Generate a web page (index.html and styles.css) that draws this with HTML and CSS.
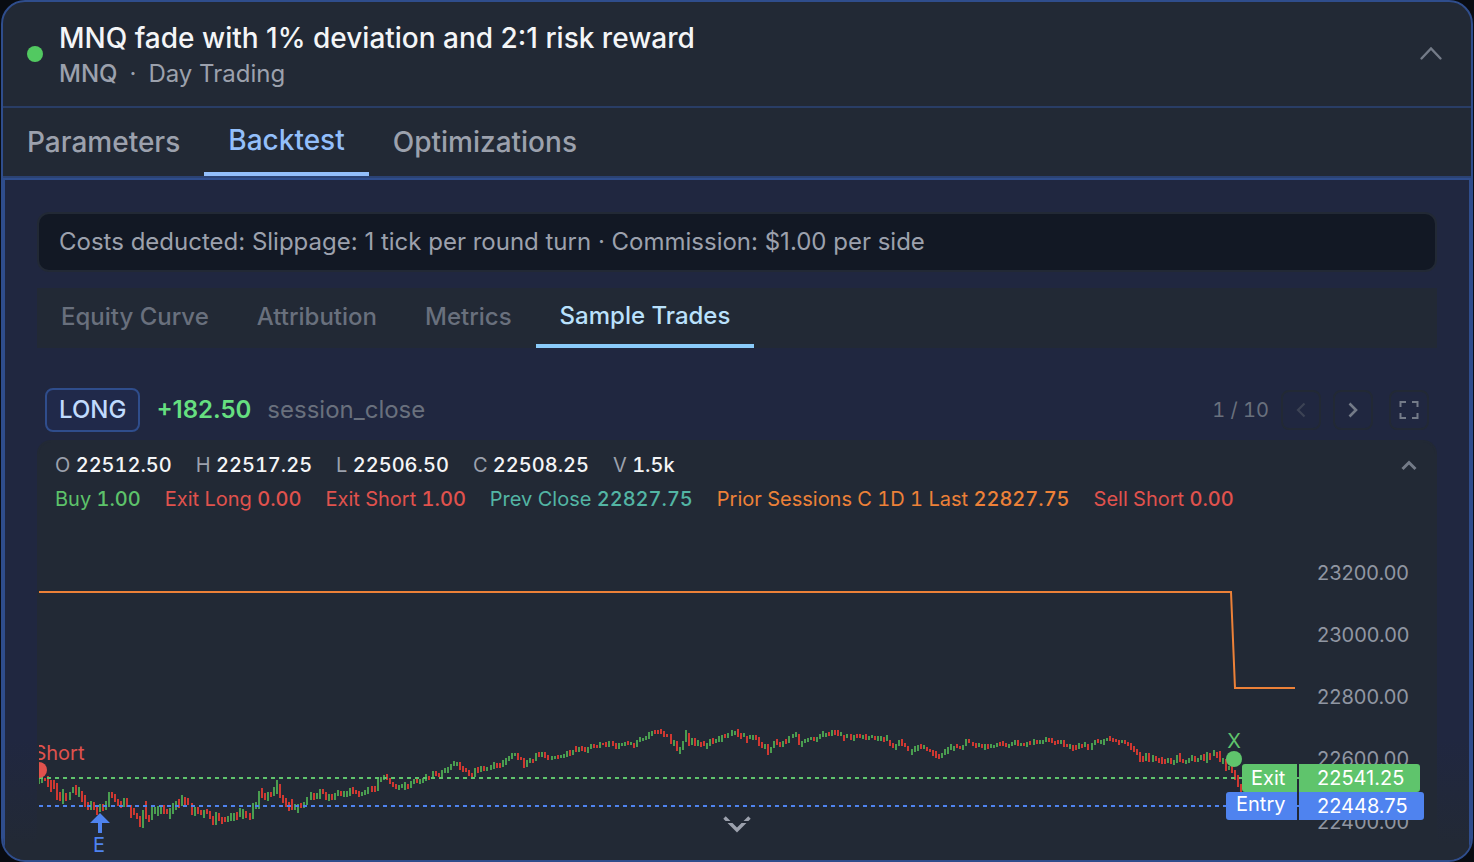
FILE: index.html
```html
<!DOCTYPE html>
<html lang="en">
<head>
<meta charset="utf-8">
<meta name="viewport" content="width=device-width, initial-scale=1">
<title>MNQ fade backtest</title>
<link rel="stylesheet" href="styles.css">
</head>
<body>
<main class="card">
  <header class="card-header">
    <span class="status-dot"></span>
    <div class="heading">
      <h1 class="title">MNQ fade with 1% deviation and 2:1 risk reward</h1>
      <p class="subtitle"><span class="symbol">MNQ</span><span class="sep">·</span><span>Day Trading</span></p>
    </div>
    <button class="icon-button collapse" type="button" aria-label="Collapse strategy">
      <svg width="24" height="24" viewBox="0 0 24 24" fill="none" stroke="currentColor" stroke-width="2.4" stroke-linecap="round"><path d="M2.500 16.500 12 6.500l9.500 10"/></svg>
    </button>
  </header>

  <nav class="tabs" aria-label="Strategy sections">
    <button class="tab" type="button">Parameters</button>
    <button class="tab active" type="button">Backtest</button>
    <button class="tab" type="button">Optimizations</button>
  </nav>

  <section class="panel">
    <p class="costs">Costs deducted: Slippage: 1 tick per round turn · Commission: $1.00 per side</p>

    <nav class="subtabs" aria-label="Backtest results">
      <button class="subtab" type="button">Equity Curve</button>
      <button class="subtab" type="button">Attribution</button>
      <button class="subtab" type="button">Metrics</button>
      <button class="subtab active" type="button">Sample Trades</button>
    </nav>

    <div class="trade-bar">
      <span class="side">LONG</span>
      <span class="profit">+182.50</span>
      <span class="reason">session_close</span>
      <span class="counter">1 / 10</span>
      <button class="icon-button boxed prev" type="button" aria-label="Previous trade" disabled>
        <svg width="24" height="24" viewBox="0 0 24 24" fill="none" stroke="currentColor" stroke-width="2.2"><path d="M15.500 5.500 9 12l6.500 6.500"/></svg>
      </button>
      <button class="icon-button boxed" type="button" aria-label="Next trade">
        <svg width="24" height="24" viewBox="0 0 24 24" fill="none" stroke="currentColor" stroke-width="2.6"><path d="M8.500 5.500 15 12l-6.500 6.500"/></svg>
      </button>
      <button class="icon-button boxed full" type="button" aria-label="Full screen">
        <svg width="24" height="24" viewBox="0 0 24 24" fill="none" stroke="currentColor" stroke-width="2"><path d="M3.500 9V4H9M15 4h5.500v5M20.500 15v5H15M9 20H3.500v-5"/></svg>
      </button>
    </div>

    <div class="chart">
      <div class="legend">
        <div class="legend-row">
          <span>O <b>22512.50</b></span>
          <span>H <b>22517.25</b></span>
          <span>L <b>22506.50</b></span>
          <span>C <b>22508.25</b></span>
          <span>V <b>1.5k</b></span>
          <button class="icon-button legend-toggle" type="button" aria-label="Collapse legend">
            <svg width="20" height="20" viewBox="0 0 20 20" fill="none" stroke="currentColor" stroke-width="3"><path d="M3.500 14 10 7.500l6.500 6.500"/></svg>
          </button>
        </div>
        <div class="legend-row">
          <span class="buy">Buy <em>1.00</em></span>
          <span class="sell">Exit Long <em>0.00</em></span>
          <span class="sell">Exit Short <em>1.00</em></span>
          <span class="prev-close">Prev Close <em>22827.75</em></span>
          <span class="prior">Prior Sessions C 1D 1 Last <em>22827.75</em></span>
          <span class="sell">Sell Short <em>0.00</em></span>
        </div>
      </div>

      <svg class="plot" viewBox="0 0 1396 344" role="img" aria-label="Price chart with entry and exit">
        <g class="axis">
          <text x="1278" y="64">23200.00</text>
          <text x="1278" y="126">23000.00</text>
          <text x="1278" y="188">22800.00</text>
          <text x="1278" y="250">22600.00</text>
          <text x="1278" y="313">22400.00</text>
        </g>
        <path class="prior-line" d="M0 76H1192L1196 172H1256"/>
        <path id="candles-up" class="candle-up"/>
        <path id="candles-down" class="candle-down"/>
        <path class="exit-line" d="M0 262H1260"/>
        <path class="entry-line" d="M0 290H1260"/>

        <text class="mark sell-mark" x="0" y="244">Sell Short</text>
        <circle class="sell-mark" cx="0" cy="254" r="8"/>

        <path class="entry-mark" d="M61 297 71 307H63V317H59V307H51Z"/>
        <text class="mark entry-mark" x="60" y="336">E</text>

        <text class="mark exit-mark" x="1195" y="232">X</text>
        <circle class="exit-mark" cx="1195" cy="243" r="8"/>

        <g class="flag">
          <path class="exit-mark" d="M1258 248H1206a3 3 0 0 0-3 3v22a3 3 0 0 0 3 3h52zM1260 248h118a3 3 0 0 1 3 3v22a3 3 0 0 1-3 3h-118z"/>
          <path class="entry-mark" d="M1258 276H1190a3 3 0 0 0-3 3v22a3 3 0 0 0 3 3h68zM1260 276h122a3 3 0 0 1 3 3v22a3 3 0 0 1-3 3h-122z"/>
          <text x="1212" y="269">Exit</text>
          <text x="1278" y="269">22541.25</text>
          <text x="1197" y="295">Entry</text>
          <text x="1278" y="297">22448.75</text>
        </g>
      </svg>
    </div>

    <button class="icon-button more" type="button" aria-label="Scroll for more">
      <svg width="28" height="18" viewBox="0 0 28 18" fill="none" stroke="currentColor" stroke-width="3.400">
        <clipPath id="more-bands"><path d="M0 0h28v5H0zM0 7h28v11H0z"/></clipPath>
        <path clip-path="url(#more-bands)" d="M1.500 1.500 14 14 26.500 1.500"/>
      </svg>
    </button>
  </section>
</main>
<script src="chart.js"></script>
</body>
</html>
```

FILE: chart.js
```js
const bars = `
78-84g 76-83g 78-81r 76-87r 80-92r 80-89r 83-100r 92-101r 89-104g 93-101r 92-100g 87-93g 85-95r 87-97g 91-102r 95-107r 102-110r 101-110g 102-110r 106-115r
104-112g 104-111r 101-110g 92-107g 92-98r 94-102r 99-106r 101-108r 98-107g 98-107r 105-118r 108-115r 113-119r 116-127r 110-128g 101-119r 115-122r 107-120g 107-114g
106-116g 106-114g 105-114r 109-114r 108-119g 103-114g 101-110g 99-108r 95-106g 97-105r 98-105r 103-115r 107-116g 107-114r 110-115r 110-118g 109-114r 111-119r 116-125r 112-125g
113-121r 117-124r 117-122r 116-122g 113-121g 113-121g 112-120r 108-117g 109-119g 111-118r 113-120r 103-119g 102-109g 91-109g 88-98r 93-100r 92-101g 92-97r 87-96g 80-94g
84-98r 95-103r 98-107r 102-111r 99-110r 104-110g 104-113g 103-108r 102-108g 97-105g 92-100g 93-100r 93-99g 89-99g 89-94r 92-100r 94-101g 94-100r 93-100g
90-96g 91-96r 91-97g 91-97g 88-96g 87-94r 90-94r 91-97r 92-96g 90-95g 87-94g 86-92r 86-92r 78-91g 77-82g 75-80g 74-80r 78-84r 82-87r 84-89r
85-90g 84-88g 82-90g 84-89r 81-88g 79-84g 79-83r 79-84g 78-83g 74-81g 76-80r 71-78g 71-76r 73-77r 70-78g 68-73g 67-73g 64-70g 61-66g 62-66g
62-70r 66-72r 68-72r 70-76r 73-77r 68-77g 67-73r 66-72g 66-71r 67-71g 65-70g 62-69g 63-68r 63-68r 60-67g 58-65g 56-61g 53-59g 53-56g
53-60r 57-60r 58-68r 60-67g 58-63g 59-63r 53-61g 52-57r 52-57g 52-58r 55-60r 56-60g 56-59g 55-59r 55-58g 54-58g 51-57g 50-56r 50-55g 46-52r
47-52g 46-51r 47-52r 47-53g 44-49g 44-48r 45-48r 42-48g 43-45r 42-47r 41-47g 41-46r 43-49r 43-49g 43-46g 42-46g 41-45r 42-45g 43-48r 40-47g
37-42g 38-41g 36-40g 32-39g 31-36g 30-34r 30-34r 29-34r 31-37r 34-37r 34-44r 40-46g 41-51r 47-54g 41-50g 30-42g 33-46r 38-45g 38-46r
40-46g 42-47r 41-46r 43-49g 39-46g 38-44r 39-43g 36-42g 35-42g 34-38r 33-38g 30-36g 31-35g 29-37r 33-39r 33-37g 36-43r 35-39g 35-40g 35-40r
37-46r 42-48r 44-49g 44-55r 47-53g 41-48g 39-45r 42-47r 41-47g 39-44r 36-43g 34-38g 32-37g 34-45r 41-47g 39-43g 38-42g 37-40g 37-41r 37-42g
34-39g 31-37g 33-37g 32-36r 30-36g 30-35r 30-36r 32-36g 35-41r 34-38g 34-40r 35-41g 34-38r 34-38r 35-39g 34-40r 36-40g 35-38g 36-40r
36-41g 36-41g 37-42r 35-41g 40-46r 43-48r 44-50g 40-46g 39-46r 43-47r 46-51r 49-55g 46-52g 45-51g 44-49r 45-49g 47-51r 49-52r 50-56r 51-58r
54-59r 53-58g 49-55g 47-54g 44-50g 46-51g 44-48r 46-49r 45-50g 39-46g 39-43r 42-46r 43-48r 43-47g 44-48r 44-50g 44-49r 44-48g 45-48g 43-47g
42-46r 41-46r 43-47r 44-48g 42-46g 40-45g 40-46r 43-46g 43-46r 42-47g 41-45r 39-45g 40-44r 40-44g 40-44g 37-42g 38-42r 38-43r 41-45r
40-44r 40-44g 40-47r 44-47r 44-49g 45-51r 45-50r 43-49g 44-48r 42-47g 44-50r 43-50g 40-45g 39-43r 40-44g 39-45g 38-41g 36-41r 38-42r 39-42r
40-45r 40-43g 40-44r 42-46r 43-50r 46-52r 49-55r 52-62r 56-62r 53-61g 53-62r 55-62g 56-61r 58-63r 57-64r 59-64r 58-63g 58-64r 60-65g 55-63g
53-62r 59-63r 60-64g 58-63g 55-61g 56-62r 58-62g 55-60g 54-61r 52-63g 53-60r 50-56g 52-58r 51-62r 58-64g 59-71r 66-70g 66-73r 70-80r
75-87r 84-100r`.trim().split(/\s+/);

const paths = { g: "", r: "" };
const baseline = 184;
const lastX = 1202;
bars.forEach((bar, i) => {
  const [, high, low, side] = bar.match(/(\d+)-(\d+)([gr])/);
  const x = Math.round((i * lastX) / (bars.length - 1));
  paths[side] += `M${x - 1} ${baseline + Number(high)}h2V${baseline + Number(low)}h-2z`;
});
document.getElementById("candles-up").setAttribute("d", paths.g);
document.getElementById("candles-down").setAttribute("d", paths.r);
```

FILE: styles.css
```css
* {
  box-sizing: border-box;
}

body {
  margin: 0;
  background: #090c12;
  color: #9ca1ad;
  font-family: Inter, "Liberation Sans", sans-serif;
  font-size: 24px;
  font-variation-settings: "opsz" 14;
}

button {
  margin: 0;
  padding: 0;
  border: 0;
  background: none;
  color: inherit;
  font: inherit;
  font-variation-settings: inherit;
  cursor: pointer;
}

svg {
  display: block;
}

.card {
  display: flex;
  flex-direction: column;
  min-height: 100vh;
  margin: 0 1px;
  border: 2px solid #2f4d8c;
  border-radius: 24px;
  background: #222935;
  overflow: hidden;
}

.card-header {
  display: flex;
  align-items: center;
  gap: 16px;
  padding: 16px 28px 16px 24px;
  border-bottom: 2px solid #293d66;
}

.status-dot {
  width: 16px;
  height: 16px;
  border-radius: 50%;
  background: #52c961;
}

.heading {
  flex: 1;
}

.title {
  margin: 0;
  color: #f4f5f7;
  font-size: 28px;
  font-weight: 500;
  line-height: 40px;
}

.subtitle {
  display: flex;
  gap: 12px;
  margin: 0;
  line-height: 32px;
}

.symbol {
  font-weight: 500;
}

.icon-button {
  display: grid;
  place-items: center;
  color: #747b88;
}

.tabs {
  display: flex;
  height: 70px;
  border-bottom: 2px solid #2b4273;
}

.tab,
.subtab {
  padding: 0 24px;
  font-weight: 500;
}

.tab {
  font-size: 28px;
}

.tab.active {
  border-bottom: 4px solid #93bffb;
  color: #93bffb;
}

.panel {
  position: relative;
  flex: 1;
  padding: 32px 32px 0;
  border: 2px solid #2f4d8c;
  border-bottom: 0;
  background: linear-gradient(to top, #222935 16px, #202740 120px);
}

.costs {
  margin: 0 0 16px;
  padding: 10px 20px;
  border: 2px solid #222935;
  border-radius: 12px;
  background: #121824;
  line-height: 36px;
}

.subtabs {
  display: flex;
  height: 60px;
  background: #222935;
  color: #69707d;
}

.subtab {
  padding-bottom: 3px;
}

.subtab.active {
  padding-bottom: 2px;
  border-bottom: 4px solid #8acbfa;
  color: #bae1fc;
}

.trade-bar {
  display: flex;
  align-items: center;
  gap: 16px;
  height: 60px;
  margin-top: 32px;
  padding: 0 8px;
  line-height: 30px;
}

.side {
  padding: 0 12px;
  border: 2px solid #2f4d8c;
  border-radius: 8px;
  background: #20294a;
  color: #c0dbfd;
  font-weight: 500;
  line-height: 40px;
}

.profit {
  color: #66df80;
  font-weight: 600;
}

.reason {
  color: #69707d;
}

.counter {
  margin-left: auto;
  color: #69707d;
  font-size: 20px;
  font-variant-numeric: tabular-nums;
}

.boxed {
  width: 40px;
  height: 40px;
  border: 2px solid #222935;
  border-radius: 8px;
}

.boxed.prev {
  margin: 0 -4px;
  color: #3c4354;
}

.chart {
  border: 2px solid #222935;
  border-bottom: 0;
  border-radius: 14px 14px 0 0;
  background: #222935;
}

.legend {
  padding: 6px 16px 0;
  font-size: 20px;
  font-variant-numeric: tabular-nums;
}

.legend-row {
  display: flex;
  align-items: center;
  gap: 24px;
  line-height: 34px;
}

.legend b {
  color: #f4f5f7;
  font-weight: 500;
}

.legend em {
  font-style: normal;
  font-weight: 500;
}

.legend-toggle {
  margin-left: auto;
}

.buy {
  color: #5dc26a;
}

.sell {
  color: #e0524d;
}

.prev-close {
  color: #53b5a4;
}

.prior {
  color: #ed8138;
}

.plot {
  width: 100%;
  height: auto;
  font-size: 20px;
}

.axis {
  fill: #9096a2;
}

.prior-line {
  fill: none;
  stroke: #ed8138;
  stroke-width: 2;
}

.candle-up {
  fill: #4a9d50;
}

.candle-down {
  fill: #cf3831;
}

.exit-line {
  stroke: #5fc46c;
  stroke-width: 2;
  stroke-dasharray: 4 4;
}

.entry-line {
  stroke: #4f83ef;
  stroke-width: 2;
  stroke-dasharray: 4 4;
}

.mark {
  text-anchor: middle;
}

.sell-mark {
  fill: #e0524d;
}

.entry-mark {
  fill: #4f83ef;
}

.exit-mark {
  fill: #5fc46c;
}

.flag text {
  fill: #ffffff;
}

.more {
  position: absolute;
  bottom: 26px;
  left: 50%;
  margin-left: -14px;
  color: #9ca1ad;
}
```
